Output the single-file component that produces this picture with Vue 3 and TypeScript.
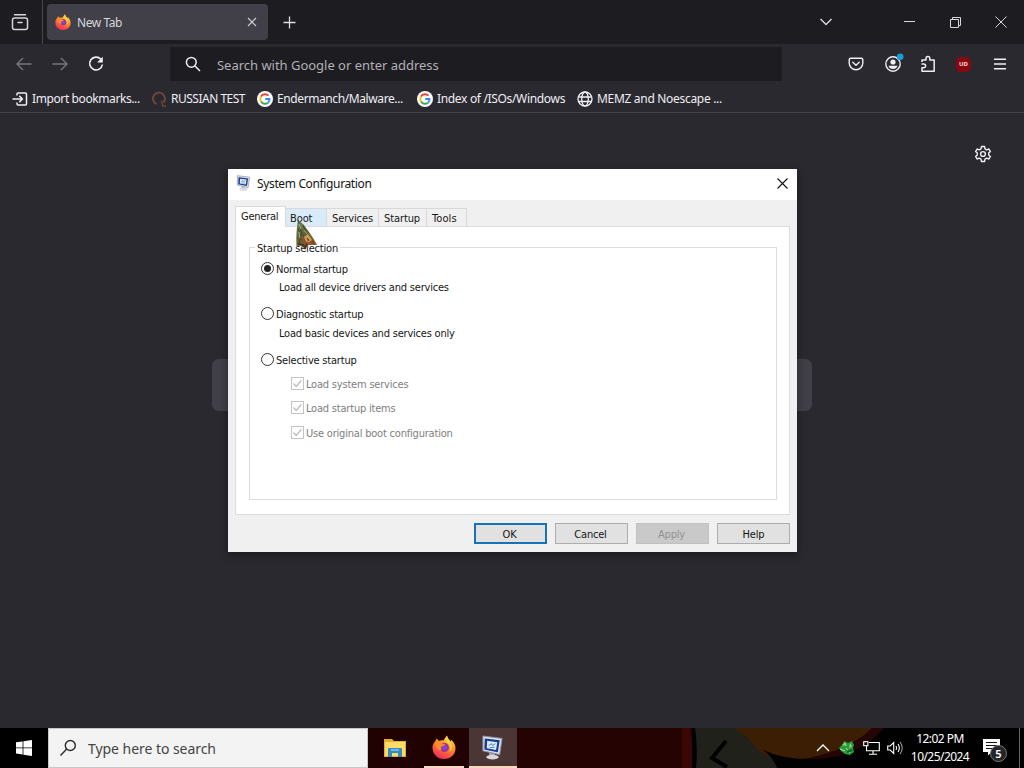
<script setup lang="ts">
interface Bookmark { label: string; icon: 'import' | 'arch' | 'google' | 'globe'; cls: string }
interface Mode { label: string; hint?: string; on: boolean; cls: string }

const bookmarks: Bookmark[] = [
  { label: 'Import bookmarks...', icon: 'import', cls: 'b1' },
  { label: 'RUSSIAN TEST', icon: 'arch', cls: 'b2' },
  { label: 'Endermanch/Malware...', icon: 'google', cls: 'b3' },
  { label: 'Index of /ISOs/Windows', icon: 'google', cls: 'b4' },
  { label: 'MEMZ and Noescape ...', icon: 'globe', cls: 'b5' },
]
const tabs = ['General', 'Boot', 'Services', 'Startup', 'Tools']
const modes: Mode[] = [
  { label: 'Normal startup', hint: 'Load all device drivers and services', on: true, cls: 'm1' },
  { label: 'Diagnostic startup', hint: 'Load basic devices and services only', on: false, cls: 'm2' },
  { label: 'Selective startup', on: false, cls: 'm3' },
]
const checks = ['Load system services', 'Load startup items', 'Use original boot configuration']
const buttons = ['OK', 'Cancel', 'Apply', 'Help']
</script>

<template>
  <div class="screen">
    <svg class="defs" width="0" height="0">
      <defs>
        <linearGradient id="fire" x1=".8" y1="0" x2=".3" y2="1">
          <stop offset="0" stop-color="#ffe14a" /><stop offset=".45" stop-color="#ff8a2a" /><stop offset="1" stop-color="#f0285a" />
        </linearGradient>
        <radialGradient id="core"><stop offset="0" stop-color="#7a4be0" /><stop offset="1" stop-color="#a0308f" /></radialGradient>
        <linearGradient id="wing" x1="0" y1="0" x2=".6" y2="1">
          <stop offset="0" stop-color="#7d9168" /><stop offset=".5" stop-color="#5f6435" /><stop offset="1" stop-color="#8a5a2a" />
        </linearGradient>
        <symbol id="firefox" viewBox="0 0 24 24">
          <path d="M3 6.500C4 5 4.500 4 4.600 3.500c1 .8 1.600 1.500 2.400 2.500 1.500-.6 3-.8 4.500-.5C12.500 3.500 14 1.500 15 .5c.3 2.500 2 3.800 4 6 .3-.6.300-1.300.2-2 3 3 4.300 6 4.300 8.700C23.500 19.500 18.500 24 12 24S.5 19 .5 12.700C.5 10 1.500 8 3 6.500z" fill="url(#fire)" />
          <circle cx="12.300" cy="12.500" r="4.600" fill="url(#core)" />
          <path d="M3.500 8c3-2 5.500-1.200 6.500.8 1 .3 2.500.2 3 .4-.3 1.500-2.500 1.700-3.500 2.300-1 .8-1 2.500.5 3.500-4 .5-6.500-3-6.500-7z" fill="#ff8b2d" />
          <path d="M15.300 1c.2 4 4.700 5.500 4.700 11 0 2-1 4-2.500 5 2-6-1-8-3.500-10.500-.8-1.500.3-3.800 1.300-5.500z" fill="#ffd13d" />
        </symbol>
        <symbol id="monitor" viewBox="0 0 24 26">
          <path d="M2 1l20 2.500-2.500 17L2 16.500z" fill="#d9dde4" stroke="#8990a2" />
          <path d="M4 3.500l15.500 2-2 12.500L3.500 15z" fill="#18398f" />
          <path d="M6.500 6l10.500 1.500-1.300 8L6 13.800z" fill="#dcecff" />
          <path d="M8 11l3-2 1 2 3-2M9 13.300l5-.5" stroke="#3f76c8" fill="none" />
          <path d="M8.500 18.500l6 1v2.500h-6z" fill="#a3a8b0" /><ellipse cx="12" cy="23" rx="6.500" ry="2.500" fill="#d8d9dc" />
        </symbol>
      </defs>
    </svg>

    <header class="tabstrip">
      <div class="view">
        <svg width="18" height="18" viewBox="0 0 18 18" fill="none" stroke="#d6d5dc" stroke-width="1.500" stroke-linecap="round"><path d="M3.500 1.700h11" /><rect x="1.500" y="4.900" width="15" height="11.600" rx="2" /><path d="M7 9.500h4" /></svg>
      </div>
      <div class="tab">
        <svg width="16" height="16"><use href="#firefox" /></svg>
        <span class="tabname">New Tab</span>
        <svg class="tabclose" width="10" height="10" viewBox="0 0 10 10" stroke="#d0cfd6" stroke-width="1.100"><path d="M1 1l8 8M9 1l-8 8" /></svg>
      </div>
      <svg class="plus" width="13" height="13" viewBox="0 0 13 13" stroke="#dddce2" stroke-width="1.300"><path d="M6.500 .5v12M.5 6.500h12" /></svg>
      <div class="wincontrols">
        <svg class="chev" width="14" height="10" viewBox="0 0 14 10" fill="none" stroke="#d5d4da" stroke-width="1.500"><path d="M1.500 2l5.500 5.500L12.500 2" /></svg>
        <svg class="min" width="11" height="11" viewBox="0 0 11 11" stroke="#d8d7dc"><path d="M0 4.500h11" /></svg>
        <svg class="restore" width="11" height="11" viewBox="0 0 11 11" fill="none" stroke="#d8d7dc"><path d="M.5 2.500h8v8h-8zM2.500 2.500v-2h8v8h-2" /></svg>
        <svg width="12" height="12" viewBox="0 0 12 12" stroke="#d8d7dc"><path d="M.5 .5l11 11M11.500 .5l-11 11" /></svg>
      </div>
    </header>

    <nav class="navbar">
      <svg class="back" width="16" height="14" viewBox="0 0 16 14" fill="none" stroke="#77767e" stroke-width="1.400"><path d="M15.500 7H1.500M7 1L1 7l6 6" /></svg>
      <svg class="fwd" width="16" height="14" viewBox="0 0 16 14" fill="none" stroke="#77767e" stroke-width="1.400"><path d="M.5 7h14M9 1l6 6-6 6" /></svg>
      <svg class="reload" width="16" height="16" viewBox="0 0 16 16" fill="none" stroke="#f1f0f5" stroke-width="1.600"><path d="M12.900 3.300A6.400 6.400 0 1 0 14.400 8.500" /><path d="M14.800 .8v5.700H9.100z" fill="#f1f0f5" stroke="none" /></svg>
      <div class="url">
        <svg width="16" height="16" viewBox="0 0 16 16" fill="none" stroke="#efeef4" stroke-width="1.500"><circle cx="6.300" cy="6.300" r="4.900" /><path d="M10 10l5 5" /></svg>
        <span>Search with Google or enter address</span>
      </div>
      <div class="tools">
        <svg width="16" height="16" viewBox="0 0 16 16" fill="none" stroke="#efeef4" stroke-width="1.400" stroke-linecap="round" stroke-linejoin="round"><path d="M2.700 2.200h10.600q1.500 0 1.500 1.500V7a6.800 6.800 0 0 1-13.600 0V3.700q0-1.500 1.500-1.500z" /><path d="M4.800 6.300L8 9.300l3.200-3" /></svg>
        <svg class="account" width="20" height="20" viewBox="0 0 20 20"><circle cx="9" cy="11" r="7.200" fill="none" stroke="#efeef4" stroke-width="1.400" /><circle cx="9" cy="9" r="2.600" fill="#efeef4" /><path d="M4.500 12.800h9Q12.500 16 9 16t-4.500-3.200z" fill="#efeef4" /><circle cx="16.200" cy="3.800" r="3.300" fill="#159dda" /></svg>
        <svg width="16" height="18" viewBox="0 0 16 18" fill="none" stroke="#efeef4" stroke-width="1.500" stroke-linejoin="round"><path d="M2 7V5h4V3.300a1.900 1.900 0 0 1 3.800 0V5h4.400v11.200H2v-3.400h1.700a1.900 1.900 0 0 0 0-3.800H1.500" /></svg>
        <span class="ublock">UD</span>
        <svg width="14" height="14" viewBox="0 0 14 14" stroke="#efeef4" stroke-width="1.400"><path d="M1 2.300h12M1 7h12M1 11.700h12" /></svg>
      </div>
    </nav>

    <div class="bookmarks">
      <div v-for="b in bookmarks" :key="b.label" class="bm" :class="b.cls">
        <svg v-if="b.icon === 'import'" width="16" height="16" viewBox="0 0 16 16" fill="none" stroke="#efeef4" stroke-width="1.500"><path d="M5 4.500V3q0-1 1-1h7.500q1 0 1 1v10q0 1-1 1H6q-1 0-1-1v-1.500" /><path d="M.5 8h10M7.300 4.900L10.400 8l-3.100 3.100" /></svg>
        <svg v-else-if="b.icon === 'arch'" width="16" height="16" viewBox="0 0 16 16" fill="none" stroke="#70443f" stroke-width="2"><path d="M4.500 12.500A6 6 0 1 1 12.500 11.500" /><path d="M10.500 9.500l1.200 5.500H15M3 12l3 1" stroke-width="1.400" /></svg>
        <svg v-else-if="b.icon === 'google'" width="16" height="16" viewBox="0 0 16 16" fill="none" stroke-width="1.900"><circle cx="8" cy="8" r="8" fill="#fff" /><path d="M11.500 4.700A4.700 4.700 0 0 0 4 5.500" stroke="#ea4335" /><path d="M4 5.500a4.900 4.900 0 0 0 0 5" stroke="#fbbc05" /><path d="M4 10.500a4.700 4.700 0 0 0 7 1.200" stroke="#34a853" /><path d="M8.200 8h4.300q0 2.300-1.500 3.700" stroke="#4285f4" /></svg>
        <svg v-else width="16" height="16" viewBox="0 0 16 16" fill="none" stroke="#efeef4" stroke-width="1.300"><circle cx="8" cy="8" r="7" /><ellipse cx="8" cy="8" rx="3.300" ry="7" /><path d="M1 6h14M1 10.500h14" /></svg>
        <span>{{ b.label }}</span>
      </div>
    </div>

    <main class="page">
      <svg class="gear" width="18" height="18" viewBox="0 0 18 18" fill="none" stroke="#efeef4" stroke-width="1.400" stroke-linejoin="round"><path d="M7.500 1.500h3l.5 2.300 1.700 1 2.200-.8 1.500 2.600-1.700 1.500v1.800l1.700 1.500-1.500 2.600-2.200-.8-1.700 1-.5 2.300h-3L7 14.200l-1.700-1-2.200.8-1.500-2.600 1.700-1.500V8.100L1.600 6.600 3.100 4l2.200.8 1.700-1z" /><circle cx="9" cy="9" r="2.400" /></svg>
      <div class="pagesearch"></div>
    </main>

    <section class="dialog">
      <div class="titlebar">
        <svg width="15" height="16" viewBox="0 0 24 26"><use href="#monitor" /></svg>
        <span>System Configuration</span>
        <svg class="dclose" width="11" height="11" viewBox="0 0 11 11" stroke="#111" stroke-width="1.100"><path d="M.5 .5l10 10M10.500 .5l-10 10" /></svg>
      </div>
      <div class="body">
        <div class="tabs">
          <div v-for="t in tabs" :key="t" class="dtab" :class="t.toLowerCase()"><span>{{ t }}</span></div>
        </div>
        <div class="panel">
          <div class="group">
            <div class="legend"><span>Startup selection</span></div>
            <div v-for="m in modes" :key="m.label" class="mode" :class="m.cls">
              <div class="row"><i class="radio" :class="{ on: m.on }"></i><span class="label">{{ m.label }}</span></div>
              <div v-if="m.hint" class="hint"><span>{{ m.hint }}</span></div>
            </div>
            <div v-for="(c, i) in checks" :key="c" class="check" :class="'c' + i">
              <svg width="13" height="13" viewBox="0 0 13 13" fill="none"><rect x=".5" y=".5" width="12" height="12" fill="#fff" stroke="#c4c4c4" /><path d="M2.500 6.500l2.700 2.800 5.300-6" stroke="#b5b5b5" stroke-width="1.200" /></svg>
              <span class="checklabel">{{ c }}</span>
            </div>
          </div>
        </div>
        <div class="buttons">
          <div v-for="b in buttons" :key="b" class="btn" :class="b.toLowerCase()">{{ b }}</div>
        </div>
      </div>
    </section>

    <svg class="pointer" width="24" height="32" viewBox="0 0 24 32">
      <path d="M3 .5C1.500 9 1 18 1.500 27l5-.5 3.500 2.500 3-3h9C18 18 12 10 8.500 5.500z" fill="url(#wing)" />
      <path d="M3 1l4 14 7 9M3 9l3 8-2 8M8 6l4 10 8 9" stroke="#3e4329" fill="none" />
      <path d="M9 18l4-3 4 6-5 4z" fill="#c4a35a" /><path d="M7 20l3 2M12 19l2 3M15 23l5 2M10 25l3-2" stroke="#a33f28" stroke-width="1.700" />
      <path d="M4 5l2 5M4 13l1 6M9 11l3 4" stroke="#a7b58a" /><path d="M3 25l5 1 2 3 2-4" stroke="#45391d" stroke-width="2" fill="none" />
    </svg>

    <footer class="taskbar">
      <div class="start"><svg width="16" height="16" viewBox="0 0 16 16" fill="#fff"><path d="M0 2.300l6.600-.9v6.100H0zM7.400 1.300L16 0v7.500H7.400zM0 8.300h6.600v6.100L0 13.500zM7.400 8.300H16V16l-8.600-1.300z" /></svg></div>
      <div class="search">
        <svg width="18" height="18" viewBox="0 0 18 18" fill="none" stroke="#2b2b2b" stroke-width="1.400"><circle cx="11.300" cy="6.500" r="5" /><path d="M7.700 10L1.500 16.500" /></svg>
        <span>Type here to search</span>
      </div>
      <div class="apps">
        <div class="app explorer"><svg width="22" height="20" viewBox="0 0 22 20"><path d="M0 1h8l2 2h12v16H0z" fill="#e7ac2c" /><path d="M1 4h20v14H1z" fill="#ffdc66" /><path d="M4 11q0-1 1-1h12q1 0 1 1v8h-4v-4H8v4H4z" fill="#338ac4" /><path d="M7 12h8" stroke="#7cc8ec" stroke-width="1.500" /></svg></div>
        <div class="app ff"><svg width="24" height="24"><use href="#firefox" /></svg></div>
        <div class="app msc"><svg width="23" height="25" viewBox="0 0 24 26"><use href="#monitor" /></svg></div>
      </div>
      <div class="wall">
        <svg width="507" height="40" viewBox="0 0 507 40">
          <rect width="507" height="40" fill="#010101" /><path d="M0 0h175v40H0z" fill="#250303" /><path d="M165 0h8q4 20 2 40h-10z" fill="#3b0704" /><path d="M175 0h2q4 20 2 40h-4z" fill="#030302" />
          <path d="M178 0h55l20 22 8 18h-82q2-20-1-40z" fill="#20211a" />
          <path d="M216 0h140q-22 20-55 29-40 9-60-7-10-14-25-22z" fill="#3b1e04" />
          <path d="M280 32q55-9 75-32h12q-18 22-56 32z" fill="#240404" />
          <path d="M209 13l-14 17 15 9" fill="none" stroke="#020202" stroke-width="4" /><path d="M260 40q-6-15-18-20 35 18 85 7v13z" fill="#030202" />
        </svg>
      </div>
      <div class="tray">
        <svg class="up" width="14" height="8" viewBox="0 0 14 8" fill="none" stroke="#fff" stroke-width="1.300"><path d="M1 7l6-6 6 6" /></svg>
        <svg class="green" width="17" height="16" viewBox="0 0 17 16"><path d="M1 8l4-4 1-3 4 2 4-2 2 4-1 3 1 4-4 3-5-1-4-3z" fill="#299b3c" /><path d="M4 5l3-3 2 4M12 3l2 3-3 3" fill="#8dd27d" /><path d="M2 9l5 2M8 8l4 5" stroke="#b2e6a0" stroke-width="1" /><path d="M9 12l5-2" stroke="#126827" stroke-width="2" /></svg>
        <svg class="net" width="17" height="16" viewBox="0 0 17 16" fill="none" stroke="#fff" stroke-width="1.100"><path d="M6 2.500h10.300v8.200H3.500V6M10 11v3M6 14.300h8" /><rect x=".7" y="1.700" width="4.200" height="4" /></svg>
        <svg class="vol" width="16" height="14" viewBox="0 0 16 14" fill="none" stroke="#fff" stroke-width="1.100"><path d="M.7 5h2.500l3.500-3.500v11L3.200 9H.7zM9 5q1.300 2 0 4M11 3q2.700 4 0 8" /><path d="M13 1q4.500 6 0 12" stroke="#999" /></svg>
        <div class="clock"><span class="time">12:02 PM</span><span class="date">10/25/2024</span></div>
        <div class="notes">
          <svg width="17" height="17" viewBox="0 0 17 17"><path d="M0 0h17v13H8.500L5 16.500V13H0z" fill="#fff" /><path d="M3 3.500h11M3 6.500h11M3 9.500h7" stroke="#111" stroke-width="1.200" /></svg>
          <span class="count">5</span>
        </div>
        <i class="peek"></i>
      </div>
    </footer>
  </div>
</template>

<style>
html, body { margin: 0; overflow: hidden; }
</style>
<style scoped>
* { box-sizing: border-box; }
svg { display: block; flex: none; }
.defs { position: absolute; }
.screen { position: relative; width: 1024px; height: 768px; overflow: hidden; display: flex; flex-direction: column; background: #2a2930; font-family: "Noto Sans", "Open Sans", sans-serif; white-space: nowrap; }
.tabstrip { height: 44px; flex: none; display: flex; align-items: center; background: #1d1c21; }
.view { width: 43px; height: 44px; padding: 13px 0 0 11px; border-right: 1px solid #47464c; }
.tab { width: 221px; height: 36px; margin-left: 4px; padding: 0 11px 0 8px; display: flex; align-items: center; background: #413f47; border-radius: 4px; color: #d7d6dc; font-size: 12px; }
.tabname { margin: 1px 0 0 6px; letter-spacing: -.45px; }
.tabclose { margin-left: auto; }
.plus { margin-left: 15px; }
.wincontrols { margin-left: auto; display: flex; align-items: center; padding-right: 17px; }
.chev { margin-right: 71px; }
.min { margin-right: 35px; }
.restore { margin-right: 34px; }
.navbar { height: 42px; flex: none; display: flex; align-items: center; padding: 0 17px 2px 16px; }
.fwd { margin-left: 20px; }
.reload { margin-left: 20px; }
.url { width: 612px; height: 34px; margin-left: 66px; padding-left: 15px; display: flex; align-items: center; gap: 16px; background: #1d1c21; color: #b1b0b6; font-size: 13px; }
.url span { margin-top: 2px; letter-spacing: -.02px; }
.tools { margin-left: auto; display: flex; align-items: center; }
.tools > svg { margin-right: 20px; }
.tools > svg.account { margin: -2px 16px 0 0; }
.tools > svg:last-child { margin: 0; }
.ublock { width: 15px; height: 15px; margin-right: 22px; border-radius: 5px; background: #8a0710; color: #f3dede; font-size: 6px; font-weight: 700; line-height: 15px; text-align: center; }
.bookmarks { height: 27px; flex: none; display: flex; align-items: center; padding: 0 0 1px 12px; border-bottom: 1px solid #434249; color: #efeef4; font-size: 12px; letter-spacing: -.4px; }
.bm { display: flex; align-items: center; gap: 4px; flex: none; }
.b1 { width: 139px; } .b2 { width: 106px; letter-spacing: -.5px; } .b3 { width: 160px; } .b4 { width: 160px; letter-spacing: -.33px; } .b5 { letter-spacing: -.31px; }
.page { flex: 1; display: flex; flex-direction: column; align-items: center; }
.gear { align-self: flex-end; margin: 32px 32px 0 0; }
.pagesearch { width: 600px; height: 52px; margin-top: 196px; border-radius: 7px; background: #414048; }

.dialog { position: absolute; left: 228px; top: 169px; width: 569px; height: 383px; display: flex; flex-direction: column; background: #f0f0f0; color: #151515; font-family: "DejaVu Sans Condensed", "Noto Sans", sans-serif; font-size: 11px; letter-spacing: -.2px; box-shadow: 0 3px 9px #0006; }
.titlebar { height: 31px; flex: none; display: flex; align-items: center; padding: 0 9px 3px 8px; background: #fff; font-family: "Noto Sans", sans-serif; font-size: 12px; letter-spacing: -.36px; }
.titlebar span { margin: 0 0 0 6px; }
.dclose { margin-left: auto; }
.body { flex: 1; display: flex; flex-direction: column; padding: 6px 7px 8px; }
.tabs { height: 20px; display: flex; align-items: flex-end; }
.dtab { height: 18px; border: 1px solid #d9d9d9; border-width: 1px 1px 0 0; display: flex; align-items: center; padding: 1px 0 0 5px; letter-spacing: -.1px; }
.general { width: 51px; height: 21px; margin-bottom: -1px; padding-left: 5px; padding-bottom: 3px; background: #fff; border-left-width: 1px; position: relative; letter-spacing: -.25px; }
.boot { width: 41px; padding-left: 4px; background: #d9ebf9; }
.services { width: 52px; } .startup { width: 48px; }
.dtab.tools { width: 40px; margin: 0; letter-spacing: .1px; }
.panel { height: 289px; border: 1px solid #dcdcdc; background: #fff; padding: 20px 12px 14px 13px; }
.group { height: 253px; border: 1px solid #dcdcdc; padding-left: 11px; }
.legend { height: 14px; margin: -7px 0 0 -6px; line-height: 16px; }
.legend span { background: #fff; padding: 0 2px; }
.row, .hint, .check { height: 14px; display: flex; align-items: center; }
.m1 { padding-top: 6px; height: 51px; } .m2 { height: 46px; } .m3 { height: 24px; }
.hint { margin: 5px 0 0 18px; }
.m2 .hint { margin-top: 6px; }
.radio { width: 13px; height: 13px; flex: none; border: 1px solid #333; border-radius: 50%; background: #fff; display: flex; align-items: center; justify-content: center; }
.radio.on::after { content: ""; width: 7px; height: 7px; border-radius: 50%; background: #222; }
.label { margin: 2px 0 0 2px; }
.check { margin: 0 0 10px 30px; gap: 2px; color: #7e7e7e; }
.checklabel { margin-top: 2px; }
.c1 { margin-bottom: 11px; }
.buttons { display: flex; justify-content: flex-end; gap: 8px; margin-top: 8px; }
.btn { width: 73px; height: 21px; border: 1px solid #adadad; background: #e1e1e1; text-align: center; line-height: 21px; }
.ok { border: 2px solid #1872b8; line-height: 19px; padding-right: 2px; }
.cancel, .apply { padding-right: 2px; }
.apply { background: #c9c9c9; border-color: #c1c1c1; color: #929292; }
.pointer { position: absolute; left: 295px; top: 219px; }

.taskbar { height: 40px; flex: none; display: flex; background: #000; color: #fff; }
.start { width: 48px; display: flex; align-items: center; justify-content: center; }
.search { width: 320px; height: 40px; border: 1px solid #c8c8c8; background: #f3f3f3; display: flex; align-items: center; padding-left: 10px; gap: 11px; color: #444; font-size: 14px; letter-spacing: -.05px; }
.apps { display: flex; width: 149px; background: #200202; }
.app { height: 40px; display: flex; align-items: center; justify-content: center; }
.explorer { width: 54px; }
.ff { width: 40px; margin: 0 5px 0 2px; border-bottom: 2px solid #f8d8bd; }
.msc { width: 48px; padding-right: 2px; background: #4b3535; border-bottom: 2px solid #f8d8bd; }
.wall { width: 507px; flex: none; }
.tray { position: absolute; right: 0; bottom: 0; height: 40px; display: flex; align-items: center; }
.up { margin-right: -1px; }
.green { margin-left: 9px; } .net { margin-left: 8px; } .vol { margin-left: 7px; }
.clock { width: 66px; margin-left: 4px; display: flex; flex-direction: column; align-items: center; font-size: 12px; line-height: 18px; letter-spacing: -.55px; }
.notes { position: relative; width: 36px; height: 18px; margin-left: 10px; }
.count { position: absolute; left: 7px; top: 6px; width: 17px; height: 17px; border: 1px solid #77777a; border-radius: 50%; background: #252528; font-size: 11px; font-weight: 600; line-height: 15px; text-align: center; }
.peek { width: 1px; height: 40px; margin-right: 4px; background: #66666a; }
</style>
